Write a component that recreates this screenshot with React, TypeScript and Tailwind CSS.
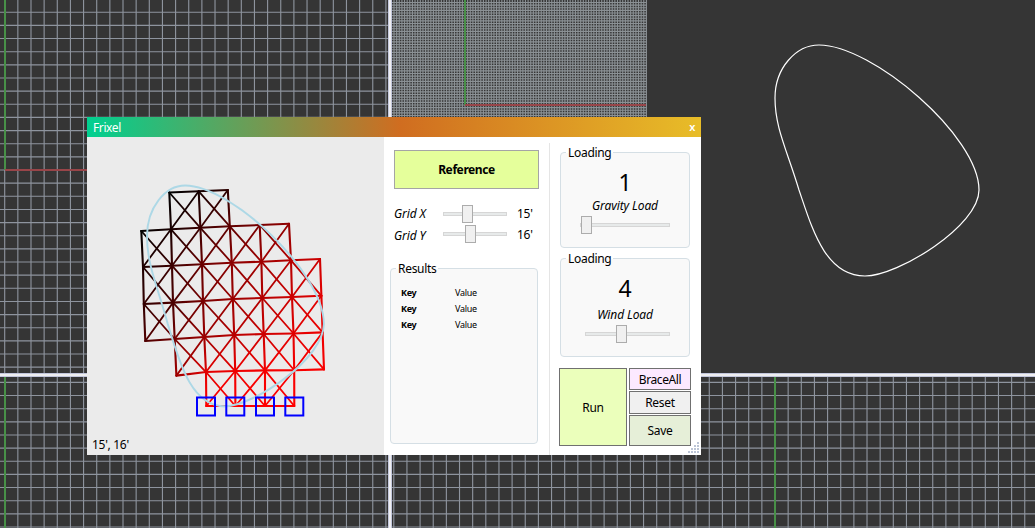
import React from "react";

type Node = [number, number, number];

const nodes: Record<string, Node> = {
  "0,1": [169.3, 192.5, 0], "0,2": [198.7, 191.3, 20], "0,3": [227.8, 190, 45],
  "1,0": [141.3, 231, 0], "1,1": [171, 229.3, 25], "1,2": [200.4, 227.8, 60], "1,3": [229.8, 226.3, 95], "1,4": [259.7, 225, 120], "1,5": [289, 223.8, 145],
  "2,0": [143, 267, 30], "2,1": [172, 265.7, 60], "2,2": [202, 264.2, 105], "2,3": [231.8, 262.8, 140], "2,4": [261.4, 261.7, 160], "2,5": [291, 260.3, 180], "2,6": [320, 259, 205],
  "3,0": [143.8, 304, 50], "3,1": [173, 302.6, 75], "3,2": [203, 301, 120], "3,3": [232.8, 299, 155], "3,4": [262.3, 298, 180], "3,5": [292, 297, 205], "3,6": [321.4, 295.8, 225],
  "4,0": [145.3, 341, 80], "4,1": [174.7, 339, 115], "4,2": [204.3, 337, 155], "4,3": [234.2, 335, 185], "4,4": [263.7, 334, 205], "4,5": [293.5, 333.5, 225], "4,6": [322.6, 332.4, 238],
  "5,1": [176.4, 375.6, 160], "5,2": [206, 372, 225], "5,3": [235.2, 371, 238], "5,4": [265, 370.4, 244], "5,5": [294.2, 370.2, 248], "5,6": [324, 369.4, 248],
  "6,2": [206.3, 406, 255], "6,3": [235.4, 406, 255], "6,4": [265, 406, 255], "6,5": [294.3, 406, 255],
};

// First and last column of braced cells in each row.
const cellRanges: [number, number][] = [[1, 3], [0, 5], [0, 6], [0, 6], [1, 6], [2, 5]];

function buildEdges() {
  const seen = new Map<string, [Node, Node, boolean]>();
  const add = (a: string, b: string, brace: boolean) => {
    if (nodes[a] && nodes[b]) seen.set(a + "|" + b, [nodes[a], nodes[b], brace]);
  };
  cellRanges.forEach(([from, to], r) => {
    for (let c = from; c < to; c++) {
      const tl = `${r},${c}`, tr = `${r},${c + 1}`, bl = `${r + 1},${c}`, br = `${r + 1},${c + 1}`;
      add(tl, tr, false);
      add(bl, br, false);
      add(tl, bl, false);
      add(tr, br, false);
      add(tl, br, true);
      add(tr, bl, true);
    }
  });
  return [...seen.values()];
}
const edges = buildEdges();

const CURVE =
  "M819 45 C796 45 775 68 775 98 C775 128 787 150 799 190 C812 228 825 276 865 276 C898 276 979 226 979 190 C979 136 872 45 819 45Z";

interface GridProps {
  x: number;
  y: number;
  w: number;
  h: number;
  ox: number;
  oy: number;
  step: number;
  color?: string;
}

function Grid({ x, y, w, h, ox, oy, step, color = "#8e949e" }: GridProps) {
  let d = "";
  for (let k = Math.ceil((x - ox) / step); ox + k * step < x + w; k++) d += `M${ox + k * step} ${y}v${h}`;
  for (let k = Math.ceil((y - oy) / step); oy + k * step < y + h; k++) d += `M${x} ${oy + k * step}h${w}`;
  return <path d={d} stroke={color} strokeWidth="1.12" fill="none" />;
}

function Viewports() {
  return (
    <svg className="absolute inset-0" width="1035" height="528">
      <Grid x={0} y={0} w={388} h={373} ox={4.7} oy={170} step={13.145} />
      <Grid x={0} y={377} w={388} h={151} ox={4.7} oy={382.4} step={13.145} />
      <Grid x={392} y={377} w={643} h={151} ox={775} oy={382.4} step={13.145} />
      <Grid x={392} y={0} w={254.5} h={120} ox={465} oy={105} step={2.629} color="#8b9195" />
      <g strokeWidth="2">
        <path d="M5 0V170M5 377V528M465 0V105M775 377V528" stroke="#489048" />
        <path d="M5 170H90M465 105H646" stroke="#984549" />
      </g>
      <path d="M388 0h4v528h-4zM0 373h1035v4H0z" fill="#c3c7dc" />
      <path d="M389 0h2v528h-2zM0 374h1035v2H0z" fill="#eeeef0" />
      <path d={CURVE} fill="none" stroke="#fff" strokeWidth="1.2" />
    </svg>
  );
}

function Mesh() {
  return (
    <svg width="297" height="318" viewBox="87 137 297 318" className="block">
      <defs>
        {edges.map(([a, b], i) => (
          <linearGradient key={i} id={`e${i}`} gradientUnits="userSpaceOnUse" x1={a[0]} y1={a[1]} x2={b[0] + 0.01} y2={b[1] + 0.01}>
            <stop offset="0" stopColor={`rgb(${a[2]},0,0)`} />
            <stop offset="1" stopColor={`rgb(${b[2]},0,0)`} />
          </linearGradient>
        ))}
      </defs>
      {edges.map(([a, b, brace], i) => (
        <path key={i} d={`M${a[0]} ${a[1]}L${b[0]} ${b[1] + 0.02}`} stroke={`url(#e${i})`} strokeWidth={brace ? 1.8 : 2.1} strokeLinecap="round" />
      ))}
      <path d={CURVE} transform="translate(147 185.5) scale(.867 .956) translate(-775 -45)" fill="none" stroke="#add8e6" strokeWidth="2.2" />
      {[206, 235.3, 265, 294.3].map((cx) => (
        <rect key={cx} x={cx - 9} y={397.5} width="18" height="18" fill="none" stroke="#00f" strokeWidth="2" />
      ))}
    </svg>
  );
}

function Slider({ width, value, className = "" }: { width: number; value: number; className?: string }) {
  return (
    <div className={`relative flex h-[18px] items-center ${className}`} style={{ width }}>
      <div className="h-1 w-full border border-[#d6d6d6] bg-[#e7eaea]" />
      <div className="absolute top-0 h-[18px] w-[11px] border border-[#acacac] bg-[#f0f0f0]" style={{ left: value }} />
    </div>
  );
}

function Group({ title, className, children }: { title: string; className: string; children: React.ReactNode }) {
  return (
    <div className={`relative rounded border border-[#d5dfe5] bg-[#f9f9f9] ${className}`}>
      <span className="absolute -top-2 left-[5px] bg-gradient-to-b from-white from-50% to-[#f9f9f9] to-50% px-0.5 leading-4">{title}</span>
      {children}
    </div>
  );
}

interface LoadProps {
  value: string;
  label: string;
  labelClass: string;
  className: string;
  children: React.ReactNode;
}

function Load({ value, label, labelClass, className, children }: LoadProps) {
  return (
    <Group title="Loading" className={className}>
      <div className="pt-3.5 text-center text-[23px] leading-[30px]">{value}</div>
      <div className={`text-center leading-4 tracking-[-0.1px] italic ${labelClass}`}>{label}</div>
      {children}
    </Group>
  );
}

const results = [["Key", "Value"], ["Key", "Value"], ["Key", "Value"]];
const gripDots = [[9, 0], [6, 3], [9, 3], [3, 6], [6, 6], [9, 6], [0, 9], [3, 9], [6, 9], [9, 9]];

export default function App() {
  return (
    <div className="relative h-[528px] w-[1035px] overflow-hidden bg-[#353535] font-['Noto_Sans','Open_Sans',sans-serif] text-[12px] tracking-[-0.3px] text-black">
      <Viewports />
      <div className="absolute top-[117px] left-[87px] flex h-[338px] w-[614px] flex-col bg-white">
        <div className="flex h-5 shrink-0 items-center justify-between bg-[linear-gradient(90deg,#00d090_0%,#d06d20_51%,#e8bd28_100%)] px-1.5 text-white">
          <span className="pt-0.5 tracking-[-0.4px]">Frixel</span>
          <span className="text-[11px] leading-4 font-semibold">x</span>
        </div>
        <div className="flex flex-1">
          <div className="relative w-[297px] bg-[#ebebeb]">
            <Mesh />
            <span className="absolute bottom-0.5 left-[5px] leading-4">15&apos;, 16&apos;</span>
          </div>
          <div className="w-[165px] pt-[13px] pl-[6px]">
            <button className="ml-1 block h-[39px] w-[145px] border border-[#a5a5a5] bg-[#e5ff9b] pt-px font-bold tracking-[-0.4px]">Reference</button>
            <div className="mt-[15px] ml-1 flex h-5 items-center">
              <span className="w-[49px] tracking-[-0.1px] italic">Grid X</span>
              <Slider width={64} value={19} />
              <span className="ml-[10px]">15&apos;</span>
            </div>
            <div className="ml-1 flex h-5 items-center">
              <span className="w-[49px] pt-1 tracking-[-0.1px] italic">Grid Y</span>
              <Slider width={64} value={22} />
              <span className="ml-[10px] pt-px">16&apos;</span>
            </div>
            <Group title="Results" className="mt-6 h-[176px] w-[148px]">
              <div className="pt-4 pl-[10px] text-[9px] leading-4">
                {results.map(([k, v], i) => (
                  <div key={i} className="flex">
                    <span className="w-[54px] font-bold">{k}</span>
                    <span>{v}</span>
                  </div>
                ))}
              </div>
            </Group>
          </div>
          <div className="relative mt-1.5 flex-1 border-l border-[#e5e5e5] pt-[9px] pl-[10px]">
            <Load value="1" label="Gravity Load" labelClass="mt-px" className="h-24 w-[130px]">
              <Slider width={90} value={1} className="mt-[2px] ml-[19px]" />
            </Load>
            <Load value="4" label="Wind Load" labelClass="mt-1" className="mt-2.5 h-[99px] w-[130px]">
              <Slider width={85} value={31} className="mt-[2px] ml-6" />
            </Load>
            <div className="mt-[11px] -ml-px flex gap-0.5">
              <button className="h-[78px] w-[68px] border border-[#707070] bg-[#ebffbb] pt-0.5">Run</button>
              <div className="flex w-[62px] flex-col gap-px">
                <button className="h-[22px] border border-[#707070] bg-[#fce9ff] pt-px leading-5 tracking-[-0.4px]">BraceAll</button>
                <button className="h-[23px] border border-[#707070] bg-[#f0f0f0] leading-5">Reset</button>
                <button className="h-[31px] border border-[#707070] bg-[#e6efd8]">Save</button>
              </div>
            </div>
            <svg className="absolute right-0.5 bottom-0.5" width="11" height="11">
              {gripDots.map(([x, y], i) => (
                <rect key={i} x={x} y={y} width="2" height="2" fill="#bcc5d6" />
              ))}
            </svg>
          </div>
        </div>
      </div>
    </div>
  );
}
